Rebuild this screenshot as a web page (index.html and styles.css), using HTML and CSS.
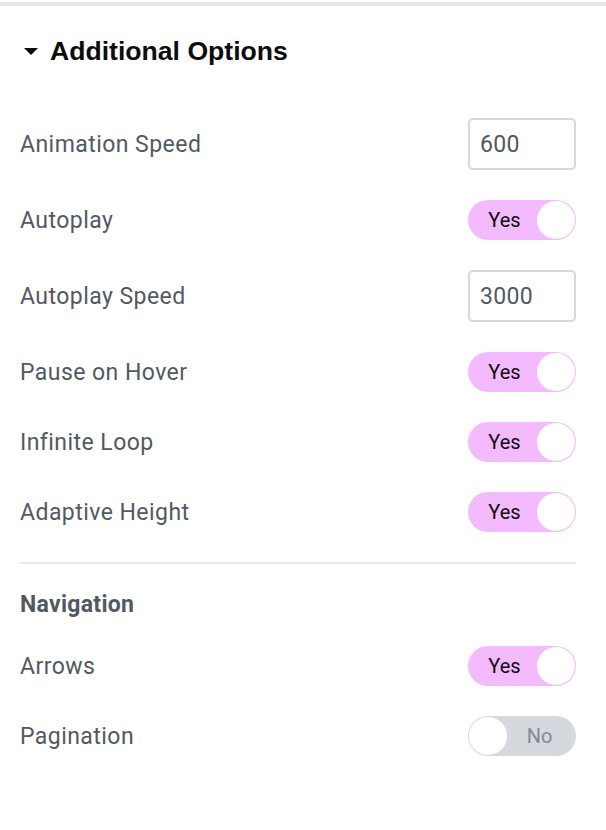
FILE: index.html
```html
<!DOCTYPE html>
<html lang="en">

<head>
    <meta charset="UTF-8" />
    <title>Additional Options</title>
    <link rel="stylesheet" href="styles.css">
</head>

<body>
    <div class="panel">
        <div class="section-title">
            <span class="caret"></span>
            <h2>Additional Options</h2>
        </div>

        <div class="controls">
            <div class="control">
                <label>Animation Speed</label>
                <input class="number" type="text" value="600">
            </div>
            <div class="control">
                <label>Autoplay</label>
                <span class="switch on"><span class="switch-text">Yes</span><span class="knob"></span></span>
            </div>
            <div class="control">
                <label>Autoplay Speed</label>
                <input class="number" type="text" value="3000">
            </div>
            <div class="control">
                <label>Pause on Hover</label>
                <span class="switch on"><span class="switch-text">Yes</span><span class="knob"></span></span>
            </div>
            <div class="control">
                <label>Infinite Loop</label>
                <span class="switch on"><span class="switch-text">Yes</span><span class="knob"></span></span>
            </div>
            <div class="control">
                <label>Adaptive Height</label>
                <span class="switch on"><span class="switch-text">Yes</span><span class="knob"></span></span>
            </div>

            <hr class="divider">

            <h3 class="sub-heading">Navigation</h3>

            <div class="control">
                <label>Arrows</label>
                <span class="switch on"><span class="switch-text">Yes</span><span class="knob"></span></span>
            </div>
            <div class="control">
                <label>Pagination</label>
                <span class="switch off"><span class="knob"></span><span class="switch-text">No</span></span>
            </div>
        </div>
    </div>
</body>

</html>
```

FILE: styles.css
```css
body {
    margin: 0;
    background: #fff;
    font-family: Roboto, 'Liberation Sans', sans-serif;
}

.panel {
    margin-top: 2px;
    border-top: 4px solid #e6e8ea;
    padding: 0 30px 60px 20px;
}

.section-title {
    display: flex;
    align-items: center;
    height: 32px;
    margin-top: 29px;
    margin-bottom: 51px;
}

.caret {
    width: 0;
    height: 0;
    margin-left: 4px;
    margin-right: 12px;
    border-left: 7px solid transparent;
    border-right: 7px solid transparent;
    border-top: 7px solid #0c0d0e;
}

.section-title h2 {
    margin: 0;
    font-family: 'Liberation Sans', Arial, sans-serif;
    font-size: 26.6px;
    font-weight: bold;
    color: #0c0d0e;
}

.controls {
    display: flex;
    flex-direction: column;
    gap: 30px;
}

.control {
    display: flex;
    align-items: center;
    justify-content: space-between;
}

.control label {
    font-size: 23px;
    letter-spacing: 0.45px;
    color: #515962;
}

.number {
    box-sizing: border-box;
    width: 108px;
    height: 52px;
    padding: 0 10px;
    border: 2px solid #d5d8dc;
    border-radius: 5px;
    font-family: Roboto, sans-serif;
    font-size: 23px;
    letter-spacing: 0.3px;
    color: #515962;
    outline: none;
}

.switch {
    box-sizing: border-box;
    display: flex;
    align-items: center;
    width: 108px;
    height: 40px;
    padding: 1px;
    border-radius: 20px;
}

.switch.on {
    background: #f3bafd;
}

.switch.off {
    background: #d5d8dc;
}

.switch-text {
    flex: 1;
    text-align: center;
    font-size: 20px;
}

.switch.on .switch-text {
    padding-left: 3px;
    color: #0c0d0e;
}

.switch.off .switch-text {
    padding-right: 3px;
    color: #818a96;
}

.knob {
    width: 38px;
    height: 38px;
    border-radius: 50%;
    background: #fff;
}

.divider {
    margin: 0;
    border: none;
    height: 2px;
    background: #e6e8ea;
}

.sub-heading {
    margin: 0;
    height: 22px;
    line-height: 22px;
    font-size: 23px;
    letter-spacing: 0.3px;
    font-weight: bold;
    color: #515962;
}
```
